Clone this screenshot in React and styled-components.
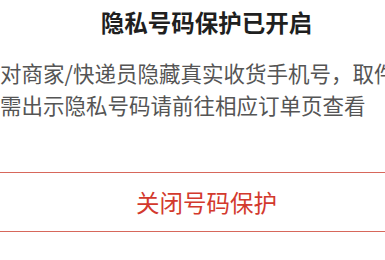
import React from "react";
import styled, { createGlobalStyle } from "styled-components";

const Global = createGlobalStyle`
  html, body {
    margin: 0;
    padding: 0;
    background: #ffffff;
    overflow: hidden;
  }
  body {
    font-family: "Noto Sans CJK SC", "Noto Sans", sans-serif;
  }
`;

const Dialog = styled.section`
  box-sizing: border-box;
  width: 533px;
  margin-left: -60px;
  display: flex;
  flex-direction: column;
  background: #ffffff;
`;

const Title = styled.h2`
  margin: 0;
  padding: 6px 60px 0;
  font-size: 23.5px;
  line-height: 32px;
  font-weight: 700;
  color: #1f1f1f;
  text-align: center;
  white-space: nowrap;
`;

const Body = styled.div`
  margin-top: 19px;
  padding: 0 60px;
  font-size: 21.5px;
  line-height: 32px;
  color: #555555;
`;

const Line = styled.div`
  white-space: nowrap;
`;

const CloseButton = styled.button`
  box-sizing: border-box;
  margin-top: 51px;
  height: 60px;
  width: 100%;
  border: 1px solid #d7675b;
  border-radius: 30px;
  background: #ffffff;
  color: #d3392d;
  font-family: "Noto Sans CJK SC", "Noto Sans", sans-serif;
  font-size: 23.5px;
  font-weight: 400;
  display: flex;
  align-items: center;
  justify-content: center;
  padding: 0;
  cursor: pointer;
`;

export default function App() {
  return (
    <>
      <Global />
      <Dialog>
        <Title>隐私号码保护已开启</Title>
        <Body>
          <Line>对商家/快递员隐藏真实收货手机号，取件</Line>
          <Line>需出示隐私号码请前往相应订单页查看</Line>
        </Body>
        <CloseButton>关闭号码保护</CloseButton>
      </Dialog>
    </>
  );
}
